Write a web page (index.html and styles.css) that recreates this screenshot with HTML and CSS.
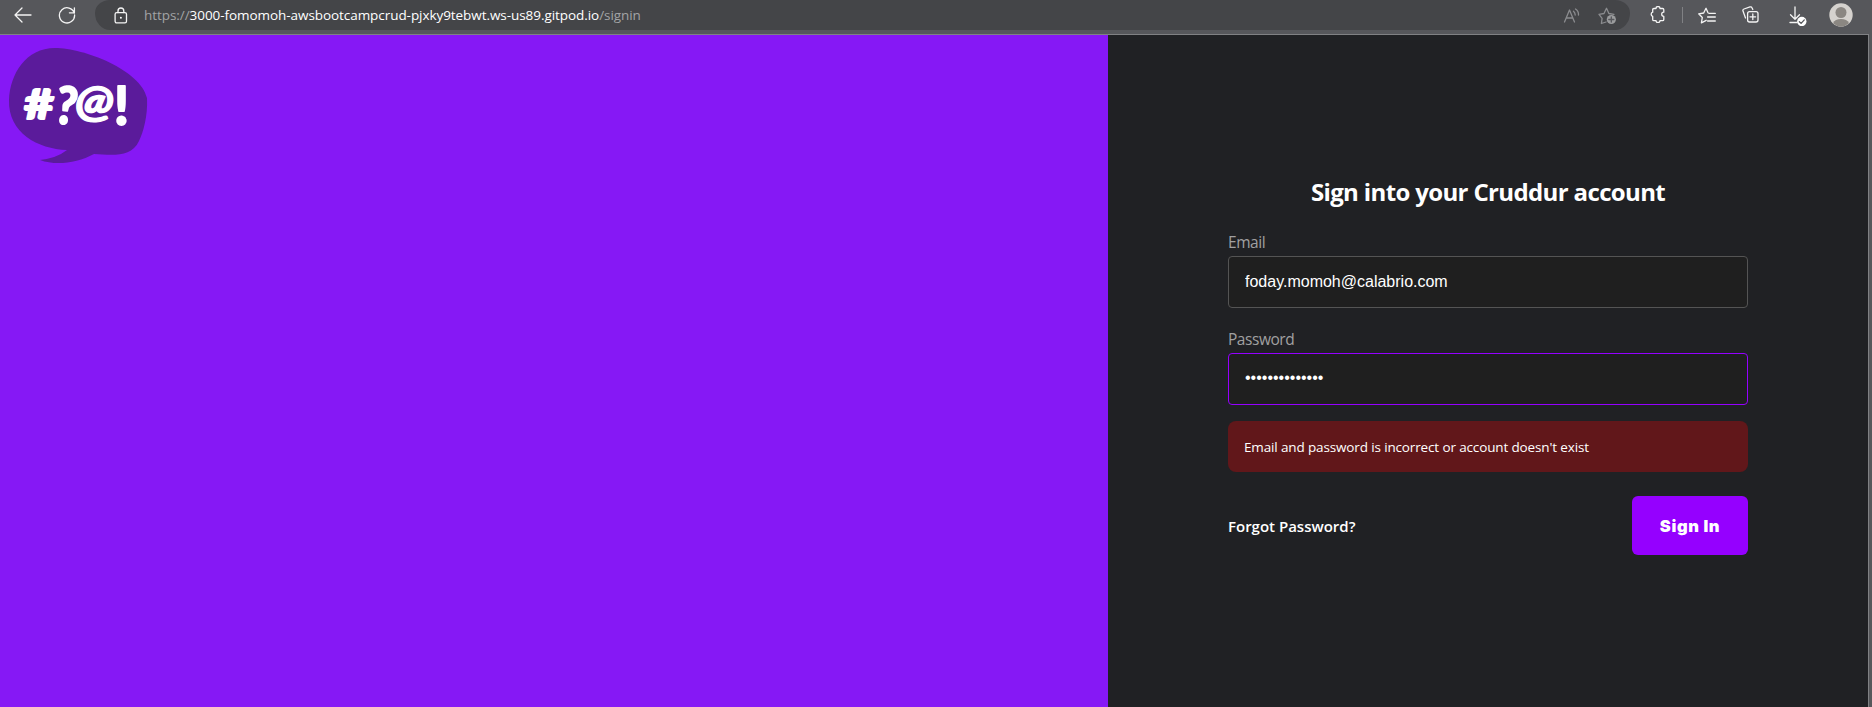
FILE: index.html
```html
<!DOCTYPE html>
<html lang="en">
<head>
<meta charset="utf-8">
<title>Cruddur</title>
<link rel="stylesheet" href="styles.css">
</head>
<body>
<div class="window">
  <header class="toolbar">
    <svg class="icon back" width="20" height="18" viewBox="0 0 20 18"><path d="M18 9H2M9 2L2 9l7 7"/></svg>
    <svg class="icon reload" width="18" height="18" viewBox="0 0 18 18"><path d="M16.3 7.2A7.6 7.6 0 1 0 16.6 9M16.4 1.8v5h-5"/></svg>
    <div class="address">
      <svg class="icon" width="14" height="17" viewBox="0 0 14 17"><rect x="1.1" y="5.6" width="11.4" height="10.3" rx="1.6"/><path d="M4 5.500V3.900a2.900 2.900 0 0 1 5.800 0V5.500"/><circle class="fill" cx="6.900" cy="10.800" r="1"/></svg>
      <div class="url"><span>https://</span><b>3000-fomomoh-awsbootcampcrud-pjxky9tebwt.ws-us89.gitpod.io</b><span>/signin</span></div>
      <div class="address-actions">
        <svg class="icon dim" width="18" height="16" viewBox="0 0 18 16"><path d="M1.500 14L6.500 2l5 12M3.300 10h6.500M10.500 3.200q1.700 1.500 1.700 3.800M12.500 1q3.200 2.200 3 6"/></svg>
        <svg class="icon dim" width="19" height="18" viewBox="0 0 19 18"><path d="M8 15l-4.600 1.500.7-5.200L1 7.300l5-.8L8.500 1.300l2.400 5.200 5 .8"/><circle class="badge" cx="13.300" cy="12.500" r="4.600"/><path class="cut" d="M13.300 10v5M10.800 12.500h5"/></svg>
      </div>
    </div>
    <div class="actions">
      <svg class="icon puzzle" width="16" height="17" viewBox="0 0 16 17"><path d="M3.900 2.500H6a2 2 0 0 1 4 0h2.600q1.200 0 1.200 1.200v2.500a2 2 0 0 0 0 4.200v3q0 1.200-1.200 1.200H10a2 2 0 0 1-4 0H3.900q-1.200 0-1.200-1.200v-3a2.200 2.200 0 0 1 0-4.200V3.700q0-1.200 1.200-1.200z"/></svg>
      <i class="divider"></i>
      <svg class="icon favs" width="18" height="17" viewBox="0 0 18 17"><path d="M10 5.700L8 1.300 5.700 6l-5 .8 3.600 3.700-.9 5.300 4.800-2.500M11 6.400h6.300M9.600 10h7.700M9.600 14h7.700"/></svg>
      <svg class="icon coll" width="17" height="17" viewBox="0 0 17 17"><rect x="5.600" y="5.600" width="10.400" height="10.400" rx="2"/><path d="M10.800 8v5.600M8 10.800h5.600M3.500 12L1 5Q.5 3.500 2 3L8 .9q1.500-.4 2 .9l.8 1.700"/></svg>
      <svg class="icon dl" width="18" height="20" viewBox="0 0 18 20"><path d="M6 1v12M1.500 8.800L6 13.300l4.500-4.500M1 16.500h7"/><circle class="fill" cx="12.800" cy="15.500" r="4.700"/><path class="cut" d="M10.400 15.700l1.700 1.700 3.200-3.500"/></svg>
      <svg class="avatar" width="24" height="24" viewBox="0 0 24 24"><circle cx="12" cy="12" r="11.700" fill="#d5d2ce"/><circle cx="12" cy="9.500" r="5.500" fill="#8b8782"/><path d="M4 20.200Q6 16 12 16t8 4.200Q16 23.700 12 23.700T4 20.200z" fill="#8b8782"/></svg>
    </div>
  </header>
  <main class="page">
    <section class="brand">
      <svg class="logo" width="138" height="116" viewBox="0 0 138 116">
        <path d="M0 52C1 26 17 0 46 0C75 0 132 22 138 50C139 68 134 85 130 93C122 110 103 107 85 106C68 115 47 118 31 112Q48 110 58 102C29 101-1 85 0 52Z"/>
        <g class="logo-text">
          <text x="15" y="71" font-size="41" textLength="30" lengthAdjust="spacingAndGlyphs">#</text>
          <text x="47" y="76" font-size="52" textLength="21" lengthAdjust="spacingAndGlyphs" transform="rotate(8 57 60)">?</text>
          <text class="at" x="66" y="69" font-size="43" textLength="39" lengthAdjust="spacingAndGlyphs">@</text>
          <text x="105" y="77" font-size="54" textLength="15" lengthAdjust="spacingAndGlyphs">!</text>
        </g>
      </svg>
    </section>
    <section class="signin">
      <form class="form">
        <h1><span>Sign into your Cruddur account</span></h1>
        <label class="field"><span>Email</span><input type="text" value="foday.momoh@calabrio.com"></label>
        <label class="field"><span>Password</span><input class="active" type="password" value="abcdefghijklmn"></label>
        <div class="error"><span>Email and password is incorrect or account doesn't exist</span></div>
        <div class="submit"><a>Forgot Password?</a><button type="button">Sign In</button></div>
      </form>
    </section>
  </main>
</div>
</body>
</html>
```
FILE: styles.css
```css
* { box-sizing: border-box; }
body { margin: 0; background: #56575b; font-family: "Open Sans", "Noto Sans", sans-serif; overflow: hidden; }
.window { height: 707px; display: flex; flex-direction: column; }
.toolbar { height: 34px; flex: none; display: flex; align-items: flex-start; background: #56575b; }
.icon { flex: none; fill: none; stroke: #f4f4f4; stroke-width: 1.3; stroke-linecap: round; stroke-linejoin: round; }
.icon .fill { fill: #fff; stroke: none; }
.icon .cut { stroke: #56575b; }
.dim { stroke: #8b8c8f; }
.dim .badge { fill: #9a9b9d; stroke: none; }
.back { margin: 6px 0 0 13px; }
.reload { margin: 6px 0 0 25px; }
.address { width: 1535px; height: 30px; margin-left: 19px; padding: 0 13px 4px 19px; display: flex; align-items: center; background: #444548; border-radius: 15px 15px 15px 15px / 13px 13px 17px 17px; }
.address > .icon { margin-top: 4px; }
.url { margin-left: 16px; margin-top: 3px; font-size: 13.500px; line-height: 20px; color: #a2a3a5; letter-spacing: -.06px; white-space: nowrap; }
.url b { font-weight: 400; color: #fff; }
.address-actions { margin-left: auto; margin-top: 5px; display: flex; gap: 17px; align-items: center; }
.actions { display: flex; align-items: flex-start; }
.puzzle { margin: 6px 0 0 20px; }
.divider { width: 1px; height: 16px; margin: 7px 0 0 16px; background: #808184; }
.favs { margin: 7px 0 0 15px; }
.coll { margin: 6px 0 0 26px; }
.dl { margin: 6px 0 0 30px; }
.avatar { margin: 3px 0 0 22px; }
.page { width: 1869px; flex: 1; display: flex; border-top: 1px solid #808184; border-right: 1px solid #808184; }
.brand { width: 1108px; background: #8618f5; padding: 13px 9px; }
.logo { display: block; overflow: visible; fill: #5b1b9b; }
.logo-text { fill: #fff; stroke: #fff; stroke-width: 1.8; stroke-linejoin: round; font-family: Lato, sans-serif; font-weight: 900; }
.at { font-style: italic; stroke-width: 1.2; }
.signin { flex: 1; display: flex; justify-content: center; background: #202124; }
.form { width: 520px; padding-top: 138px; display: flex; flex-direction: column; }
h1 { margin: 0 0 19px; height: 38px; line-height: 38px; font-size: 24px; text-align: center; color: #fff; white-space: nowrap; letter-spacing: -.64px; }
.field { display: flex; flex-direction: column; gap: 2px; margin-bottom: 19px; }
.field > span { height: 24px; line-height: 24px; font-size: 15.500px; letter-spacing: -.45px; color: #a0a0a1; }
input { width: 100%; height: 52px; padding: 0 16px; border: 1px solid #545454; border-radius: 4px; background: #1f1f1f; color: #fff; font: 16px "Liberation Sans", Arial, sans-serif; outline: none; }
input.active { border-color: #9500ff; padding-bottom: 2px; }
.error { height: 51px; margin-top: -3px; padding-left: 16px; line-height: 52px; border-radius: 8px; background: #61171a; color: #fff; font-size: 13.500px; letter-spacing: -.14px; white-space: nowrap; }
.submit { margin-top: 24px; height: 59px; display: flex; justify-content: space-between; align-items: center; }
.submit a { color: #fff; font-size: 15px; font-weight: 600; }
button { width: 116px; height: 59px; padding: 0; border: 0; border-radius: 6px; background: #9500ff; color: #fff; font: 900 16.500px Inter, sans-serif; letter-spacing: .6px; }
```
